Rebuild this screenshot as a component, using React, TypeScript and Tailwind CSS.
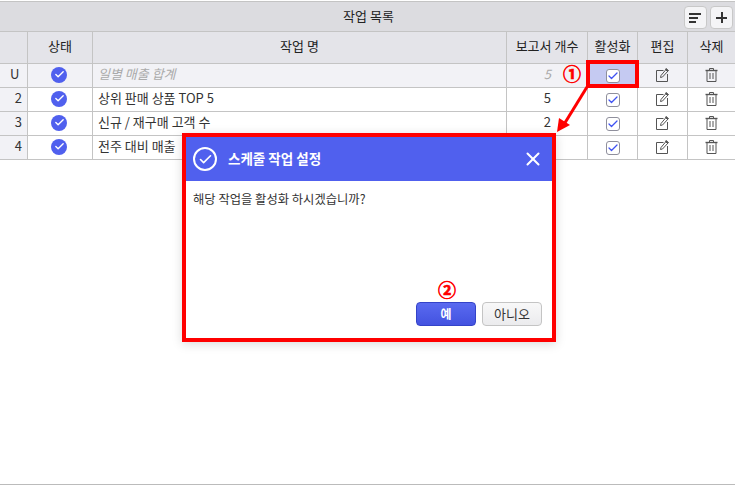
import { Check, X } from "lucide-react";

const COLS = "grid grid-cols-[28px_65px_414px_81px_50px_50px_1fr]";

const rows = [
  { no: "U", name: "일별 매출 합계", count: "5", muted: true },
  { no: "2", name: "상위 판매 상품 TOP 5", count: "5", muted: false },
  { no: "3", name: "신규 / 재구매 고객 수", count: "2", muted: false },
  { no: "4", name: "전주 대비 매출", count: "", muted: false },
];

const StatusIcon = () => (
  <span className="flex h-4 w-4 items-center justify-center rounded-full bg-[#5060ee]">
    <Check size={11} strokeWidth={3} className="text-white" />
  </span>
);

const CheckBox = () => (
  <span className="flex h-[14px] w-[14px] items-center justify-center rounded-[3px] border border-[#8f8f9c] bg-white">
    <Check size={12} strokeWidth={2.6} className="text-[#3f52f2]" />
  </span>
);

const EditIcon = () => (
  <svg width="13" height="14" viewBox="0 0 13 14" fill="none" stroke="#555" strokeWidth="1">
    <path d="M7.5 2.5H0.5V13.5H11.5V6" />
    <path d="M4.5 9.5L5 7.5L10 1.5L12 3L6.5 9Z" />
    <path d="M10 0.5L12.5 2.5L11.5 3.5L9.5 1.5Z" fill="#555" />
  </svg>
);

const TrashIcon = () => (
  <svg width="13" height="14" viewBox="0 0 13 14" fill="none" stroke="#555" strokeWidth="1">
    <path d="M0.5 2.5H12.5" strokeWidth="1.4" />
    <path d="M4.5 2V0.5H8.5V2" />
    <path d="M2 3V13.5H11V3" />
    <path d="M5 5V11M8 5V11" />
  </svg>
);

const App = () => {
  return (
    <div
      className="relative h-[485px] w-[735px] overflow-hidden bg-white text-[13px] text-[#333]"
      style={{ fontFamily: '"Noto Sans CJK KR", "Noto Sans", sans-serif' }}
    >
      <div className="flex h-[485px] flex-col border-b border-[#bbb] pt-[1px]">
        {/* Title bar */}
        <div className="relative flex h-[31px] items-center justify-center border-y border-[#c4c4c4] bg-[#dcdce0] pb-[1px] pl-[2px] text-[#222]">
          작업 목록
          <div className="absolute top-[4px] right-[2px] flex gap-[3px]">
            <button className="flex h-[23px] w-[23px] flex-col items-start justify-center gap-[2px] rounded-[4px] border border-[#c8c8c8] bg-[#f4f4f6] pl-[4px]">
              <span className="h-[2px] w-[12px] bg-[#333]" />
              <span className="h-[2px] w-[9px] bg-[#333]" />
              <span className="h-[2px] w-[7px] bg-[#333]" />
            </button>
            <button className="relative flex h-[23px] w-[23px] items-center justify-center rounded-[4px] border border-[#c8c8c8] bg-[#f4f4f6]">
              <span className="absolute h-[2px] w-[11px] bg-[#333]" />
              <span className="absolute h-[11px] w-[2px] bg-[#333]" />
            </button>
          </div>
        </div>

        {/* Header */}
        <div className={`${COLS} h-[32px] border-b border-[#c4c4c4] bg-[#e4e4e9] text-[#222]`}>
          {["", "상태", "작업 명", "보고서 개수", "활성화", "편집", "삭제"].map((label, i) => (
            <div key={i} className="flex items-center justify-center border-r border-[#c4c4c4] pb-[3px] last:border-r-0">
              {label}
            </div>
          ))}
        </div>

        {/* Rows */}
        {rows.map((row) => (
          <div
            key={row.no}
            className={`${COLS} h-[24px] border-b border-[#c4c4c4] ${row.muted ? "bg-[#f2f2f6]" : "bg-white"}`}
          >
            <div
              className={`flex items-center border-r border-[#c4c4c4] bg-[#f2f2f6] pb-[3px] ${
                row.muted ? "justify-start pl-[10px]" : "justify-end pr-[5px]"
              }`}
            >
              {row.no}
            </div>
            <div className="flex items-center justify-center border-r border-[#c4c4c4] pr-[2px] pb-[2px]">
              <StatusIcon />
            </div>
            <div
              className={`flex items-center border-r border-[#c4c4c4] pb-[3px] pl-[5px] ${
                row.muted ? "text-[#aaa] italic" : ""
              }`}
            >
              {row.name}
            </div>
            <div
              className={`flex items-center justify-end border-r border-[#c4c4c4] pr-[36px] pb-[3px] ${
                row.muted ? "text-[#aaa] italic" : ""
              }`}
            >
              {row.count}
            </div>
            <div
              className={`flex items-center justify-center border-r border-[#c4c4c4] pt-[1px] ${
                row.muted ? "bg-[#c5caf2]" : ""
              }`}
            >
              <CheckBox />
            </div>
            <div className="flex items-center justify-center border-r border-[#c4c4c4] pb-[2px]">
              <EditIcon />
            </div>
            <div className="flex items-center justify-center pb-[2px]">
              <TrashIcon />
            </div>
          </div>
        ))}
      </div>

      {/* Red highlight on the checkbox cell */}
      <div className="absolute top-[60px] left-[586px] h-[28px] w-[53px] border-[4px] border-[#f00]" />
      <span className="absolute top-[62px] left-[563px] text-[18px] leading-[22px] font-bold text-[#f00] [-webkit-text-stroke:0.6px_#f00]">
        ①
      </span>

      {/* Arrow */}
      <svg className="absolute top-[85px] left-[552px]" width="44" height="52" viewBox="0 0 44 52" fill="none">
        <path d="M35 2L11 41" stroke="#f00" strokeWidth="3" />
        <path d="M5 47L7 33L18 40Z" fill="#f00" />
      </svg>

      {/* Dialog */}
      <div className="absolute top-[133px] left-[182px] flex h-[209px] w-[374px] flex-col border-[4px] border-[#f00] bg-white shadow-[0_2px_10px_rgba(0,0,0,0.15)]">
        <div className="flex h-[44px] items-center bg-[#5060ee] pr-[8px] pl-[7px] text-white">
          <span className="flex h-[24px] w-[24px] items-center justify-center rounded-full border-2 border-white">
            <Check size={15} strokeWidth={2.6} />
          </span>
          <span className="ml-[11px] flex-1 pb-[2px] text-[13.5px] font-bold">스케줄 작업 설정</span>
          <X size={22} strokeWidth={2.2} />
        </div>
        <div className="flex-1 px-[7px] pt-[9px] text-[12.3px] text-[#333]">해당 작업을 활성화 하시겠습니까?</div>
        <div className="relative flex justify-end gap-[6px] pr-[10px] pb-[12px]">
          <span className="absolute top-[-24px] right-[96px] text-[18px] leading-[22px] font-bold text-[#f00] [-webkit-text-stroke:0.6px_#f00]">
            ②
          </span>
          <button className="flex h-[24px] w-[60px] items-center justify-center rounded-[4px] border border-[#3443c8] bg-gradient-to-b from-[#5a6af0] to-[#4352e0] text-[12px] font-bold text-white">
            예
          </button>
          <button className="flex h-[24px] w-[60px] items-center justify-center rounded-[4px] border border-[#c4c4c4] bg-gradient-to-b from-[#f8f8f8] to-[#ebebed] pb-[1px] text-[#333]">
            아니오
          </button>
        </div>
      </div>
    </div>
  );
};

export default App;
